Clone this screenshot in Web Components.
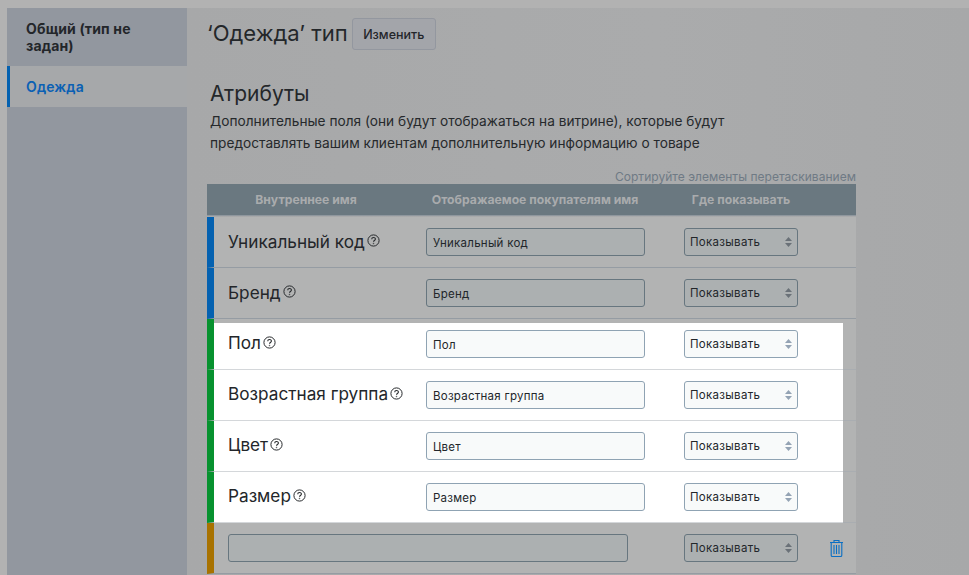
<!DOCTYPE html>
<html lang="ru"><head><meta charset="utf-8"><title>Одежда</title>
<style>
html,body{margin:0;height:575px;overflow:hidden;background:#b2b2b2}
body{font-family:Inter,"Noto Sans",sans-serif;color:#212529}
</style></head><body>
<x-app>
  <x-sidebar>
    <x-side-item>Общий (тип не задан)</x-side-item>
    <x-side-item active>Одежда</x-side-item>
  </x-sidebar>
  <x-main>
    <x-title name="‘Одежда’ тип" action="Изменить"></x-title>
    <x-section heading="Атрибуты">Дополнительные поля (они будут отображаться на витрине), которые будут предоставлять вашим клиентам дополнительную информацию о товаре</x-section>
    <x-table hint="Сортируйте элементы перетаскиванием" c1="Внутреннее имя" c2="Отображаемое покупателям имя" c3="Где показывать">
      <x-row color="#0461b0" name="Уникальный код"></x-row>
      <x-row color="#0461b0" name="Бренд"></x-row>
      <x-row color="#07922f" name="Пол" lit first></x-row>
      <x-row color="#07922f" name="Возрастная группа" lit></x-row>
      <x-row color="#07922f" name="Цвет" lit></x-row>
      <x-row color="#07922f" name="Размер" lit></x-row>
      <x-row color="#a87200" custom></x-row>
    </x-table>
  </x-main>
</x-app>
<script>
function def(tag, css, html){
  customElements.define(tag, class extends HTMLElement{
    connectedCallback(){
      if(this.shadowRoot) return;
      const s=this.attachShadow({mode:'open'});
      s.innerHTML='<style>'+css+'</style>'+(typeof html==='function'?html(this):html);
    }
  });
}
const esc=s=>(s||'').replace(/&/g,'&amp;').replace(/"/g,'&quot;').replace(/</g,'&lt;');
def('x-app',':host{display:flex;height:567px;padding:8px 0 0 7px;overflow:hidden;box-sizing:content-box}','<slot></slot>');
def('x-sidebar',':host{display:block;width:180px;flex:none;height:567px;background:#92979f}','<slot></slot>');
def('x-side-item',`:host{display:block;padding:12px 20px 12px 19px;font-size:14px;letter-spacing:.15px;line-height:17px;font-weight:700;color:#23262a}
:host([active]){background:#a6a8aa;color:#0a60b4;border-left:3px solid #0461b0;padding:12px 20px 12px 16px;font-weight:600}`,'<slot></slot>');
def('x-main',':host{display:block;flex:1;background:linear-gradient(90deg,#a7a8a9,#aaabac 60%,#a7a8a9);padding-left:20px;min-width:0;height:567px;overflow:hidden}','<slot></slot>');
def('x-title',`:host{display:flex;align-items:center;gap:4px;height:50px}
h1{margin:0;font-size:22px;font-weight:400;color:#24272a;line-height:30px}
button{font:500 12.5px Inter,sans-serif;letter-spacing:0;color:#23262a;background:#a3a5aa;border:1px solid #93979f;border-radius:3px;height:32px;width:84px;padding:0;margin-top:2px}`,
 e=>`<h1>${esc(e.getAttribute('name'))}</h1><button>${esc(e.getAttribute('action'))}</button>`);
def('x-section',`:host{display:block;padding:22px 0 0 3px;width:530px}
h2{margin:0;font-size:21px;font-weight:400;line-height:28px;color:#24272a}
p{margin:0;padding-top:2px;font-size:13.7px;line-height:22px;color:#26292c}`,
 e=>`<h2>${esc(e.getAttribute('heading'))}</h2><p><slot></slot></p>`);
def('x-table',`:host{display:block;width:649px;margin-top:14px}
.hint{text-align:right;font-size:12px;letter-spacing:.03px;line-height:18px;color:#6f7a85;height:16px}
.head{display:grid;grid-template-columns:198px 260px 152px 39px;background:#6a7880;color:#a9abad;font-size:12.2px;font-weight:700;height:31px;line-height:31px;border-bottom:1px solid #8f979e;margin-bottom:1px}
.head div{text-align:center;white-space:nowrap}`,
 e=>`<div class="hint">${esc(e.getAttribute('hint'))}</div><div class="head"><div>${esc(e.getAttribute('c1'))}</div><div>${esc(e.getAttribute('c2'))}</div><div>${esc(e.getAttribute('c3'))}</div></div><slot></slot>`);
def('x-row',`:host{display:block;height:51px;box-sizing:border-box;background:#b2b3b3;border-bottom:1px solid #959ca3;border-left:7px solid var(--c)}
:host([lit]){border-bottom-color:#a9adb1}
.in{display:flex;align-items:center;height:50px;box-sizing:border-box;padding-left:14px;margin-right:13px}
:host([lit]) .in{background:#fff;height:51px;border-bottom:1px solid #d4d7da;padding-bottom:1px}
:host([first]) .in{height:47px;margin-top:0;position:relative;top:4px;padding-bottom:5px}
.name{width:198px;flex:none;display:flex;align-items:center;gap:2px;font-size:17.2px;line-height:22px;color:#23262a;white-space:nowrap;margin-top:-1px}
.name svg{margin-top:-2px}
input{font:11.5px Inter,sans-serif;letter-spacing:.25px;color:#22262a;height:28px;box-sizing:border-box;border:1px solid #67767f;border-radius:3px;background:#acb0b1;padding:2px 6px 0;margin:0;width:219px;flex:none}
:host([lit]) input,:host([lit]) .sel{background:#f8fafa;border-color:#8fa3b3}
input.bigin{width:400px}
.sel{margin-left:39px;flex:none;width:114px;height:28px;box-sizing:border-box;border:1px solid #67767f;border-radius:3px;background:#acb0b1;display:flex;align-items:center;justify-content:space-between;padding:0 5px;font-size:11.5px;letter-spacing:.3px;color:#22262a}
.bigin + .sel{margin-left:56px}
:host([lit]) .sel svg path{fill:#94a3b4}
.trash{margin-left:31px;flex:none;display:block}`,
 e=>{
  const n=e.getAttribute('name');
  e.style.setProperty('--c',e.getAttribute('color'));
  const sel=`<div class="sel"><span>Показывать</span><svg width="7" height="12" viewBox="0 0 7 12"><path d="M3.500 1 7 5H0zM3.500 11 0 7h7z" fill="#6a7178"/></svg></div>`;
  if(e.hasAttribute('custom')) return `<div class="in"><input class="bigin" value="">${sel}<svg class="trash" width="15" height="18" viewBox="0 0 15 18" fill="none" stroke="#0a6fc4" stroke-width="1.1"><path d="M1 3.500h13M5 3.200V1.500h5v1.700M2.200 3.500v12.800c0 .7.500 1.200 1.200 1.200h8.200c.7 0 1.200-.5 1.200-1.200V3.500M5 6v9M7.500 6v9M10 6v9"/></svg></div>`;
  return `<div class="in"><div class="name"><span>${esc(n)}</span><svg width="13" height="13" viewBox="0 0 13 13" fill="none" stroke="#26292c"><circle cx="6.500" cy="6.500" r="5.600"/><path d="M4.700 5.200c0-2.300 3.700-2.300 3.700-.1 0 1.400-1.900 1.300-1.900 2.700" stroke-width="1.100"/><circle cx="6.500" cy="9.500" r=".35" stroke-width=".8"/></svg></div><input value="${esc(n)}">${sel}</div>`;
 });
</script>
</body></html>
